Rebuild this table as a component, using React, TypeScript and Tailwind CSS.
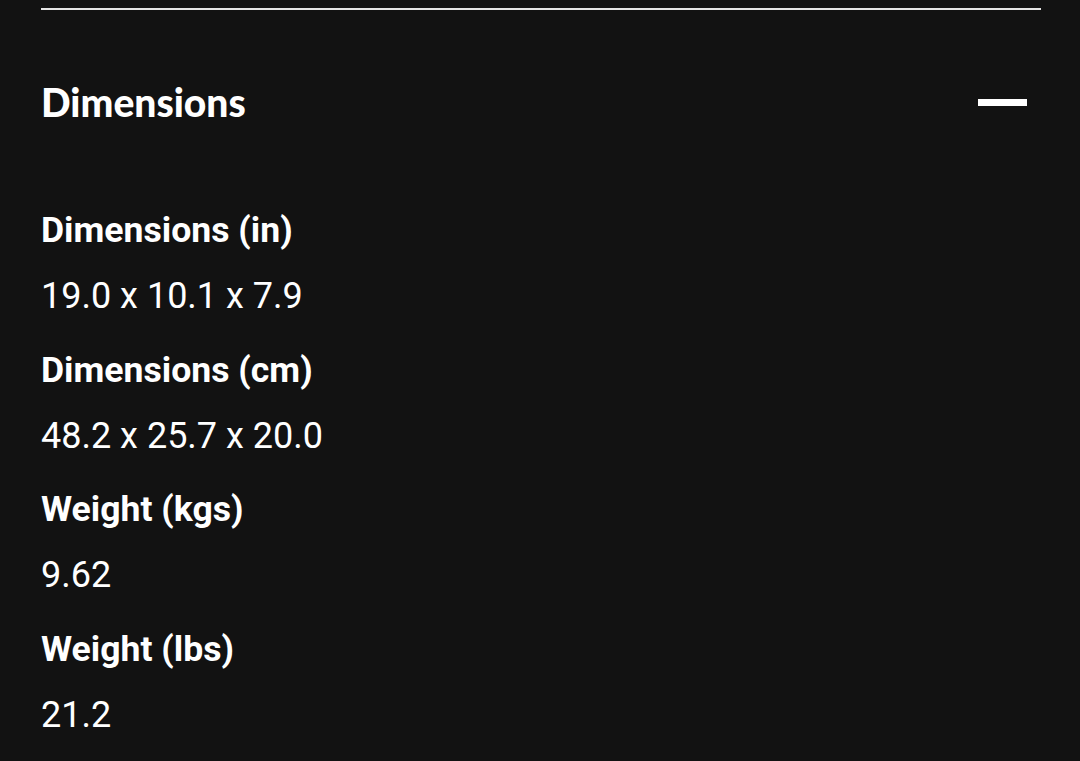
import React from "react";

const rows = [
  ["Dimensions (in)", "19.0 x 10.1 x 7.9"],
  ["Dimensions (cm)", "48.2 x 25.7 x 20.0"],
  ["Weight (kgs)", "9.62"],
  ["Weight (lbs)", "21.2"],
];

export default function App() {
  return (
    <div className="w-[1080px] h-[761px] bg-[#121212] text-white overflow-hidden" style={{ fontFamily: "Roboto, 'Liberation Sans', sans-serif" }}>
      <div className="px-[41px] pt-[8px]">
        <div className="h-[2px] w-[1000px] bg-[#e4e4e4]" />
        <div className="flex items-center justify-between h-[184px]">
          <h2 className="text-[39px] leading-none" style={{ fontFamily: "Lato, 'DejaVu Sans', sans-serif", fontWeight: 900 }}>Dimensions</h2>
          <div className="w-[49px] h-[7px] bg-white mr-[12px]" />
        </div>
        <div className="flex flex-col pt-[16px]">
          {rows.map(([k, v]) => (
            <div key={k} className="flex flex-col">
              <div className="text-[35.6px] font-bold leading-[40px] h-[66px]">{k}</div>
              <div className="text-[36px] leading-[40px] h-[73.5px]">{v}</div>
            </div>
          ))}
        </div>
      </div>
    </div>
  );
}
